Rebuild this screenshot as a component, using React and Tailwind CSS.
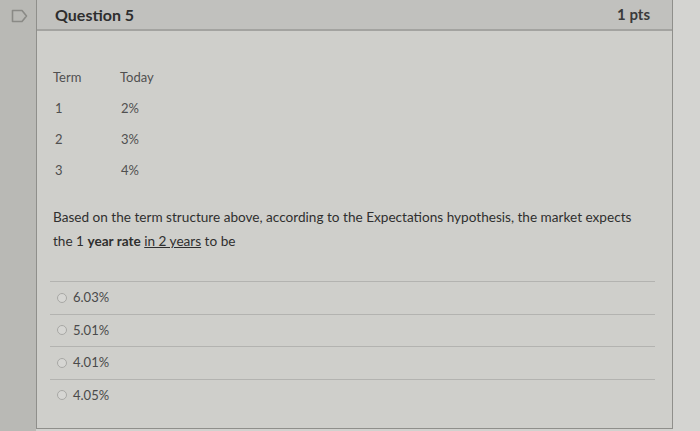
import React from "react";

const rows = [
  ["1", "2%"],
  ["2", "3%"],
  ["3", "4%"],
];

const answers = ["6.03%", "5.01%", "4.01%", "4.05%"];

const App = () => {
  return (
    <div
      className="flex h-[431px] w-[700px] overflow-hidden bg-[#d2d2cf]"
      style={{ fontFamily: "Lato, 'Noto Sans', sans-serif" }}
    >
      {/* Left gutter with flag icon */}
      <div className="w-[36px] shrink-0 bg-[#b9b9b5] pt-[9px] pl-[11px]">
        <svg width="17" height="14" viewBox="0 0 17 14" fill="none">
          <path
            d="M1.5 1.5 H11 L15.5 7 L11 12.5 H1.5 Z"
            stroke="#8a8a86"
            strokeWidth="1.6"
            strokeLinejoin="round"
          />
        </svg>
      </div>

      {/* Question card */}
      <div className="flex h-[429px] w-[637px] shrink-0 flex-col border-x border-b border-[#8f8f8b] bg-[#cfcfcb]">
        {/* Header */}
        <div className="flex h-[31px] shrink-0 items-center justify-between border-b-2 border-[#a3a3a0] bg-[#c1c1be] pl-[18px] pr-[22px]">
          <span className="text-[16px] font-bold text-[#2e2e2e]">Question 5</span>
          <span className="text-[15px] font-bold text-[#3a3a3a]">1 pts</span>
        </div>

        {/* Body */}
        <div className="flex flex-col pl-[16px] pr-[16px]">
          {/* Table */}
          <div className="mt-[38px] flex flex-col text-[13px] text-[#505050]">
            <div className="flex h-[18px] items-center">
              <span className="w-[67px]">Term</span>
              <span>Today</span>
            </div>
            {rows.map(([t, v]) => (
              <div key={t} className="mt-[13px] flex h-[18px] items-center">
                <span className="w-[68px] pl-[2px]">{t}</span>
                <span>{v}</span>
              </div>
            ))}
          </div>

          {/* Prompt */}
          <p className="mt-[25px] text-[13.6px] leading-[24px] text-[#2f2f2f]">
            Based on the term structure above, according to the Expectations hypothesis, the market expects
            <br />
            the 1 <span className="font-bold">year rate</span>{" "}
            <span className="underline">in 2 years</span> to be
          </p>

          {/* Answers */}
          <div className="mt-[28px] mr-[1px] ml-[-3px] flex flex-col">
            {answers.map((a) => (
              <div
                key={a}
                className="flex h-[32.5px] items-center gap-[6px] border-t border-[#b3b3b0] pl-[7px]"
              >
                <span className="h-[10px] w-[10px] rounded-full border border-[#a8a8a5] bg-[#d6d6d3]" />
                <span className="text-[13px] text-[#4a4a4a]">{a}</span>
              </div>
            ))}
          </div>
        </div>
      </div>

      {/* Right strip */}
      <div className="flex-1 bg-[#d4d4d1]" />
    </div>
  );
};

export default App;
